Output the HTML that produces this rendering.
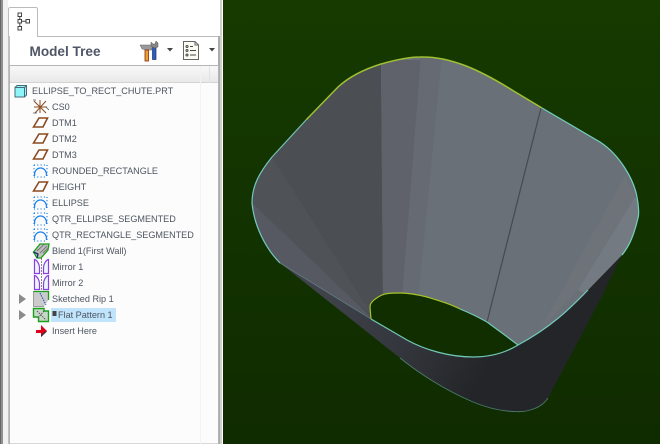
<!DOCTYPE html>
<html><head><meta charset="utf-8"><style>
html,body{margin:0;padding:0;width:660px;height:444px;overflow:hidden;background:#fff}
svg{display:block}
text{font-family:"Liberation Sans",sans-serif}
.t{font-size:9.1px;fill:#4d5560}
</style></head><body>
<svg width="660" height="444" viewBox="0 0 660 444" xmlns="http://www.w3.org/2000/svg">
<defs>
<linearGradient id="bg" x1="0" y1="0" x2="0" y2="1"><stop offset="0" stop-color="#163a00"/><stop offset="1" stop-color="#0f2b00"/></linearGradient>
<linearGradient id="hd" x1="0" y1="0" x2="0" y2="1"><stop offset="0" stop-color="#f8f8f8"/><stop offset="1" stop-color="#e9e9e9"/></linearGradient>
<linearGradient id="dk" gradientUnits="userSpaceOnUse" x1="320" y1="290" x2="480" y2="380"><stop offset="0" stop-color="#40434b"/><stop offset=".55" stop-color="#33363c"/><stop offset="1" stop-color="#232528"/></linearGradient>
<clipPath id="in"><path d="M272 157L338 87C350 76 365 69 381 64C395 60 408 57 420 57C450 56 480 70 512 90L600 142C620 155 634 180 637 197C639 207 639 215 638 218C634 235 630 245 622 255L588 290C573 305 555 325 518 345C505 335 495 328 487 322C478 317 470 313 460 309C450 304 440 301 427 297C415 294 408 293 400 293C392 293 385 293 380 296C373 300 370 303 370 307L371 319L280 263C265 248 254 225 252 203C252 185 260 172 272 157Z"/></clipPath>
</defs>
<rect width="660" height="444" fill="#fff"/>
<!-- left panel frame -->
<rect x="0" y="0" width="1" height="444" fill="#666"/>
<rect x="1" y="0" width="2" height="444" fill="#909090"/>
<rect x="3" y="0" width="5" height="444" fill="#f1f1f1"/>
<rect x="8" y="36" width="212" height="408" fill="#fff"/>
<rect x="8" y="36" width="211" height="1" fill="#bbb"/>
<path d="M8.500 36V9.500Q8.500 7.500 10.500 7.500H36Q37.500 7.500 37.500 9.500V36" fill="#fff" stroke="#bbb"/>
<rect x="9" y="35" width="28" height="3" fill="#fff"/>
<rect x="8" y="36" width="2" height="408" fill="#c0c0c0"/>
<rect x="218" y="36" width="2" height="408" fill="#ababab"/>
<rect x="220" y="0" width="2" height="444" fill="#d0d0d0"/>
<rect x="222" y="0" width="1" height="444" fill="#fff"/>
<!-- tab icon -->
<g fill="#fff" stroke="#444" stroke-width="1"><rect x="18" y="13" width="3.500" height="3.500"/><rect x="18" y="19.500" width="3.500" height="3.500"/><rect x="26" y="19.500" width="3.500" height="3.500"/><rect x="18" y="26.500" width="3.500" height="3.500"/><path d="M19.800 16.500V19.500M19.800 23V26.500M21.500 21.200H26" fill="none"/></g>
<text x="29.500" y="56" font-size="13.600" font-weight="bold" fill="#4f5666">Model Tree</text>
<!-- tools icon -->
<path d="M140 45H151L152 50H147L142 49Z" fill="#999" stroke="#666" stroke-width=".5"/>
<rect x="145" y="50" width="3.500" height="11" fill="#e8a030" stroke="#8a2a10" stroke-width=".8"/>
<rect x="152.500" y="47" width="3.500" height="12.500" fill="#2c5fb8" stroke="#1a3370" stroke-width=".7"/>
<path d="M151 42L153 44L155 44L156 41L158 43L158 47L154 48L151 46Z" fill="#888" stroke="#555" stroke-width=".5"/>
<path d="M167 48H173L170 51.500Z" fill="#444"/>
<!-- list icon -->
<path d="M183.500 41.500H195L198.500 45V59.500H183.500Z" fill="#fcfcf4" stroke="#666"/>
<path d="M195 41.500V45H198.500" fill="none" stroke="#666"/>
<g fill="none" stroke="#444"><circle cx="187" cy="46.500" r="1"/><circle cx="187" cy="50.500" r="1"/><circle cx="187" cy="55" r="1"/><path d="M190 46.500H193M190 50.500H196M190 55H196"/></g>
<path d="M209 48H215L212 51.500Z" fill="#444"/>
<!-- tree box -->
<rect x="9.500" y="65.500" width="209" height="378.500" fill="#fcfcfc" stroke="#b4b4b4"/>
<rect x="10" y="66" width="208" height="16" fill="url(#hd)"/>
<rect x="10" y="82" width="208" height="1" fill="#d4d4d4"/>
<rect x="200" y="66" width="1" height="378" fill="#f2f2f2"/>
<rect x="209" y="66" width="1" height="17" fill="#e2e2e2"/>
<!-- part icon -->
<path d="M15 87.500L17 85.500H26.500V95L24.500 97H15Z" fill="#8ff5f8" stroke="#4a6a78"/>
<path d="M24.500 97V87.500H15M24.500 87.500L26.500 85.500" fill="none" stroke="#4a6a78"/>
<text class="t" x="32" y="94">ELLIPSE_TO_RECT_CHUTE.PRT</text>
<!-- CS0 -->
<g fill="none"><path d="M34 101L46 113M46 101L35 113M40 100V113M34 107H47" stroke="#8a4a20" stroke-width="1"/><path d="M33 100H36M33 113H37M46 107L49 110" stroke="#555" stroke-width=".8"/></g>
<text class="t" x="52" y="110">CS0</text>
<!-- planes -->
<g fill="#fff" stroke="#8b4a1e" stroke-width="1.600"><path d="M33.500 127L39 118H47.500L43 127Z"/><path d="M33.500 143L39 134H47.500L43 143Z"/><path d="M33.500 159L39 150H47.500L43 159Z"/><path d="M33.500 191L39 182H47.500L43 191Z"/></g>
<text class="t" x="52" y="126">DTM1</text>
<text class="t" x="52" y="142">DTM2</text>
<text class="t" x="52" y="158">DTM3</text>
<text class="t" x="52" y="174">ROUNDED_RECTANGLE</text>
<text class="t" x="52" y="190">HEIGHT</text>
<text class="t" x="52" y="206">ELLIPSE</text>
<text class="t" x="52" y="222">QTR_ELLIPSE_SEGMENTED</text>
<text class="t" x="52" y="238">QTR_RECTANGLE_SEGMENTED</text>
<!-- sketches -->
<g fill="none" stroke="#1e80e8" stroke-width="1.300">
<g><path d="M34.500 176V175C34.500 171 37 168 40.500 168C44 168 46.500 171 46.500 175V176"/><path d="M34 165H47M34 165V177M47 165V177M34 177H47" stroke-dasharray="1 2.300"/></g>
<g><path d="M34.500 208V207C34.500 203 37 200 40.500 200C44 200 46.500 203 46.500 207V208"/><path d="M34 197H47M34 197V209M47 197V209M34 209H47" stroke-dasharray="1 2.300"/></g>
<g><path d="M34.500 224V223C34.500 219 37 216 40.500 216C44 216 46.500 219 46.500 223V224"/><path d="M34 213H47M34 213V225M47 213V225M34 225H47" stroke-dasharray="1 2.300"/></g>
<g><path d="M34.500 240V239C34.500 235 37 232 40.500 232C44 232 46.500 235 46.500 239V240"/><path d="M34 229H47M34 229V241M47 229V241M34 241H47" stroke-dasharray="1 2.300"/></g>
</g>
<!-- blend -->
<path d="M33.500 252L40 244H49L48 250L41 258L37 258Z" fill="#c0c0c0" stroke="#18a018" stroke-width="1.300"/>
<path d="M37 251L44 244.500M40 253L47 246M43 253L48 248" stroke="#777" stroke-width="1"/>
<path d="M33.500 252L38 254L37 258" fill="none" stroke="#14306a" stroke-width="1.300"/>
<text class="t" x="52" y="254">Blend 1(First Wall)</text>
<!-- mirrors -->
<g fill="#eef4ff" stroke="#8a3ee0" stroke-width="1.200"><path d="M34.500 259.500V273.500H39.500V268C39.500 264 37 260 34.500 259.500Z"/><path d="M48.500 259.500V273.500H43.500V268C43.500 264 46 260 48.500 259.500Z"/><path d="M34.500 275.500V289.500H39.500V284C39.500 280 37 276 34.500 275.500Z"/><path d="M48.500 275.500V289.500H43.500V284C43.500 280 46 276 48.500 275.500Z"/></g>
<path d="M41.500 258V291" stroke="#555" stroke-width=".7" stroke-dasharray="2 1"/>
<text class="t" x="52" y="270">Mirror 1</text>
<text class="t" x="52" y="286">Mirror 2</text>
<!-- expanders -->
<path d="M19 294L26 299L19 304Z" fill="#8c8c8c"/>
<path d="M19 310L26 315L19 320Z" fill="#8c8c8c"/>
<!-- rip -->
<path d="M33.500 291.500H48.500V300L44 306.500H33.500Z" fill="#cbcbcb"/>
<path d="M33.500 291.500H48.500V300" fill="none" stroke="#18a018" stroke-width="1.300"/>
<path d="M33.500 291.500V306.500H44" fill="none" stroke="#555" stroke-dasharray="1 1"/>
<path d="M40 293L46 305" stroke="#1a50c0" stroke-width="1" stroke-dasharray="1.500 1"/>
<text class="t" x="52" y="302">Sketched Rip 1</text>
<!-- flat pattern -->
<path d="M33.500 308.500H44V311H48.500V321.500H38.500V317H33.500Z" fill="#c8d8c8" stroke="#18a018" stroke-width="1.400"/>
<path d="M37 311L46 320M44 311L38 318" stroke="#555" stroke-width="1" stroke-dasharray="1.500 1"/>
<rect x="51" y="308" width="65" height="14" fill="#bfe4fb"/>
<rect x="52.500" y="311" width="4" height="5" fill="#444"/>
<text class="t" x="58" y="318">Flat Pattern 1</text>
<!-- insert here -->
<path d="M36 330H41V325L47 331L41 337V333H36Z" fill="#e00018"/>
<path d="M41 337L47 331.500H45L41 335Z" fill="#333"/>
<text class="t" x="52" y="334">Insert Here</text>

<!-- viewport -->
<rect x="223" y="0" width="437" height="444" fill="url(#bg)"/>
<!-- dark outer body -->
<path d="M280 263L400 358C420 374 445 390 473 402C485 407 497 410 507 411C515 412 525 412 530 410C538 408 544 404 548 398L600 300L622 255L588 290L518 345L371 319Z" fill="url(#dk)"/>
<path d="M400 358C420 374 445 390 473 402C485 407 497 410 507 411C515 412 525 412 530 410C538 408 544 404 548 398" fill="none" stroke="#5f9a90" stroke-width=".9" opacity=".7"/>
<!-- hole -->
<path d="M371 319L407 340C425 350 450 357 473 357C490 357 505 353 518 345C505 335 495 328 487 322C478 317 470 313 460 309C450 304 440 301 427 297C415 294 408 293 400 293C392 293 385 293 380 296C373 300 370 303 370 307Z" fill="#102e00"/>
<!-- lit interior -->
<g clip-path="url(#in)">
<rect x="240" y="50" width="410" height="310" fill="#6a7078"/>
<path d="M381 60L335 80L240 170L240 260L371 325L383 300Z" fill="#4b4f54"/>
<path d="M272 157L240 205L372 315Z" fill="#4f5257"/>
<path d="M252 203L240 250L280 270L372 318Z" fill="#565961"/>
<path d="M381 60H421L402 300H383Z" fill="#5f626a"/>
<path d="M421 55H442L418 300H402Z" fill="#666a72"/>
<path d="M625 175L635 197L578 290L540 330Z" fill="#6e737a"/>
<path d="M635 197L645 218L622 260L588 295L578 290Z" fill="#747a81"/>
<path d="M541 108L487 322" stroke="#47494c" stroke-width="1.200"/>
</g>
<!-- edges -->
<g fill="none" stroke-width="1.200">
<path d="M272 157L306 120" stroke="#72bfb2"/>
<path d="M306 120L338 87C350 76 365 69 381 64C395 60 408 57 420 57C450 56 480 70 512 90L542 108" stroke="#9fc030" stroke-width="1.500"/>
<path d="M542 108L600 142C620 155 634 180 637 197C639 207 639 215 638 218C634 235 630 245 622 255" stroke="#72cfc0"/>
<path d="M588 290C573 305 555 325 518 345C505 353 490 357 473 357C450 357 425 350 407 340L371 319" stroke="#72c8b8"/>
<path d="M371 319L370 307C370 303 373 300 380 296C385 293 392 293 400 293C408 293 415 294 427 297C440 301 450 304 460 309" stroke="#a4c428"/>
<path d="M460 309C470 313 478 317 487 322C495 328 505 335 518 345" stroke="#72c8b8"/>
<path d="M272 157C260 172 252 185 252 203C254 225 265 248 280 263" stroke="#72c8c0"/>
<path d="M280 263L371 319" stroke="#6a8f90" stroke-width=".8" opacity=".7"/>
</g>
</svg>
</body></html>
